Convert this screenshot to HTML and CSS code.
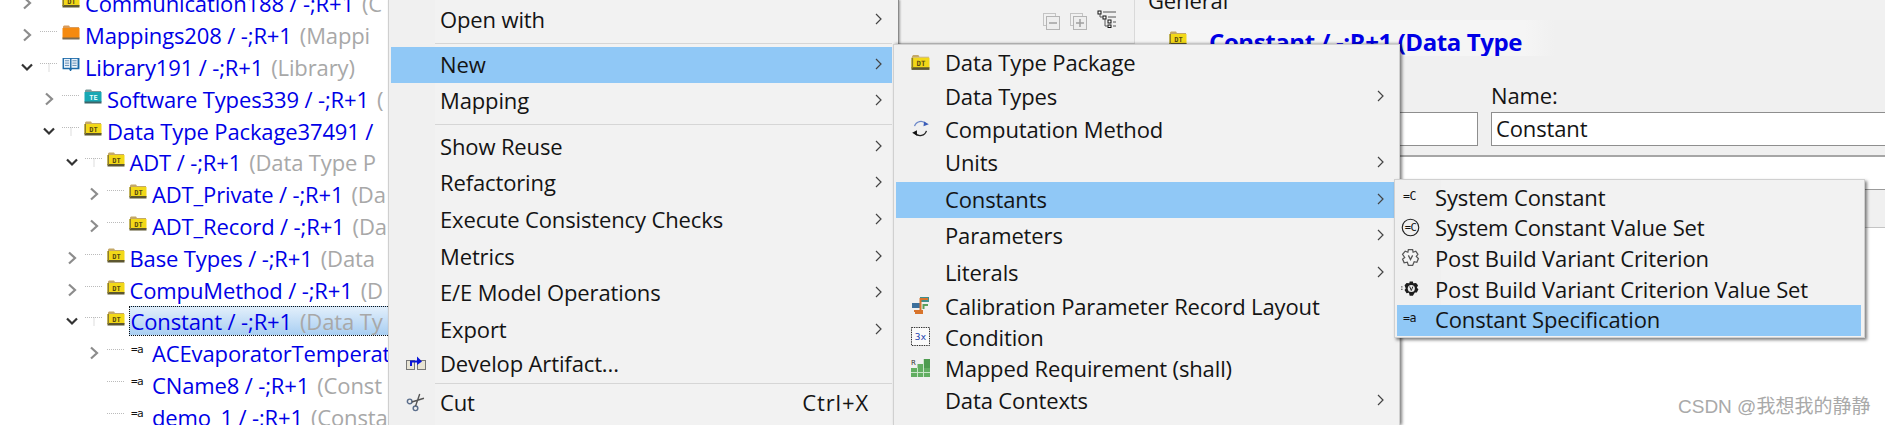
FILE: index.html
```html
<!DOCTYPE html>
<html lang="en">
<head>
<meta charset="utf-8">
<title>Constant</title>
<link rel="stylesheet" href="styles.css">
</head>
<body>
<svg class="defs" xmlns="http://www.w3.org/2000/svg">
  <defs>
    <symbol id="right" viewBox="0 0 12 14"><path d="M3 1.5 9 7 3 12.5" fill="none" stroke="#8c8c8c" stroke-width="2.2"/></symbol>
    <symbol id="down" viewBox="0 0 12 14"><path d="M1 4.5 6 9.5 11 4.5" fill="none" stroke="#333" stroke-width="2.2"/></symbol>
    <symbol id="dotline" viewBox="0 0 18 14"><path d="M0 3.5H18" stroke="#bbb" stroke-width="1" stroke-dasharray="1 1"/></symbol>
    <symbol id="dott" viewBox="0 0 18 14"><path d="M0 3.5H18M9 3.5V12" stroke="#bbb" stroke-width="1" stroke-dasharray="1 1"/></symbol>
    <symbol id="folder" viewBox="0 0 18 15">
      <path d="M1 3V1.5L2 .5H7L8 2H17V3Z" fill="#c4a868"/>
      <rect x=".5" y="3" width="17" height="10" fill="#f2d818"/>
      <rect x=".5" y="12" width="17" height="2.5" fill="#5c5630"/>
      <rect x=".5" y="3" width="1.5" height="10" fill="#8c7c2c"/>
      <text x="9.5" y="11" class="ftxt">DT</text>
    </symbol>
    <symbol id="orange" viewBox="0 0 18 15">
      <path d="M1 3V1.5L2 .5H7L8 2H17V3Z" fill="#d99c5c"/>
      <rect x=".5" y="3" width="17" height="10.5" fill="#f58a10"/>
      <rect x=".5" y="12.5" width="17" height="2" fill="#7c6a50"/>
    </symbol>
    <symbol id="book" viewBox="0 0 19 16">
      <path d="M.5 1H18.5V13H10.5L9.5 15H8.500L7.500 13H.5Z" fill="#1c6aa8"/>
      <rect x="2" y="2" width="6.500" height="9.500" fill="#eaf2fa"/>
      <rect x="10" y="2" width="6.500" height="9.500" fill="#eaf2fa"/>
      <path d="M3 4H7.500M3 6.500H7.500M3 9H7.500M11 4H15.500M11 6.500H15.500M11 9H15.500" stroke="#5a88b0"/>
    </symbol>
    <symbol id="te" viewBox="0 0 18 15">
      <path d="M1 3V1.5L2 .5H7L8 2H17V3Z" fill="#7a9a9a"/>
      <rect x=".5" y="3" width="17" height="10" fill="#18a8b4"/>
      <rect x=".5" y="12.500" width="17" height="2" fill="#3d6468"/>
      <text x="9.500" y="11" class="ftxt ftxt-w">TE</text>
    </symbol>
    <symbol id="eqa" viewBox="0 0 18 15"><text x="2" y="9.500" class="mono">=a</text></symbol>
    <symbol id="eqc" viewBox="0 0 18 15"><text x="2" y="11" class="mono">=C</text></symbol>
    <symbol id="eqcc" viewBox="0 0 20 20">
      <circle cx="10" cy="10" r="8.700" fill="none" stroke="#222" stroke-width="1.200"/>
      <text x="4" y="13.500" class="mono">=C</text>
    </symbol>
    <symbol id="gear" viewBox="0 0 18 18">
      <path d="M7 1.500H11L11.500 4 14 3 16 6 14.500 8 16.500 10 15 13.500 12.500 13 11 16.500H7L6 13.500 3 14 1.500 10.500 3.500 9 1.500 6 4 3 6.500 4Z" fill="#f4f4f4" stroke="#555" stroke-width="1.200"/>
      <path d="M7 7 9 11 11 7" fill="none" stroke="#555" stroke-width="1.200"/>
    </symbol>
    <symbol id="gearb" viewBox="0 0 24 18">
      <path d="M0 7H3M0 10H3" stroke="#222" stroke-dasharray="2 1"/>
      <path d="M11 0H15L15.500 2.500 19 2 21.500 5 20 8 22 10 20 14 17.500 14 15 18H11L10 14.500 7 15 4.500 11 6 9 4.500 5 7 2 10.500 2.500Z" fill="#1c1c1c"/>
      <circle cx="13" cy="9" r="4.500" fill="#e8e8e8"/>
      <path d="M11 6.500 13 11.500 15 6.500" fill="none" stroke="#222" stroke-width="1.200"/>
    </symbol>
    <symbol id="develop" viewBox="0 0 20 14">
      <rect x=".5" y="4.500" width="8" height="9" fill="#e8e4d4" stroke="#777"/>
      <rect x="11.500" y="4.500" width="8" height="9" fill="#e8e4d4" stroke="#777"/>
      <path d="M5 10V5.500H13" fill="none" stroke="#0a14d8" stroke-width="2"/>
      <path d="M11 .5 16 5.500 11 9Z" fill="#0a14d8"/>
    </symbol>
    <symbol id="scissors" viewBox="0 0 18 18">
      <circle cx="3.500" cy="8" r="2.200" fill="none" stroke="#5c6f8c" stroke-width="1.400"/>
      <circle cx="9" cy="14.500" r="2.200" fill="none" stroke="#5c6f8c" stroke-width="1.400"/>
      <path d="M5.500 8.500 17 5M9 12.500 13 1" fill="none" stroke="#555" stroke-width="1.300"/>
    </symbol>
    <symbol id="compu" viewBox="0 0 16 16">
      <path d="M3 6A5.500 5.500 0 0 1 12.500 4" fill="none" stroke="#6a86c8" stroke-width="1.100"/>
      <path d="M11 2 15 4.500 10.500 6Z" fill="#3a5cb8"/>
      <path d="M13 10A5.500 5.500 0 0 1 3.500 12" fill="none" stroke="#222" stroke-width="1.100"/>
      <path d="M5 9.500 1 11.500 5 14Z" fill="#111"/>
    </symbol>
    <symbol id="calib" viewBox="0 0 19 19">
      <rect x="9" y="1" width="9" height="5" fill="#3f8f8c"/>
      <rect x="1" y="7" width="9" height="5" fill="#3b6f9c"/>
      <path d="M17 3H9.500V15H3" fill="none" stroke="#d8742c" stroke-width="2"/>
      <path d="M17 9H12.500V13" fill="none" stroke="#5aa05c" stroke-width="2"/>
      <rect x="4" y="14" width="8" height="4" fill="#d8742c"/>
    </symbol>
    <symbol id="cond" viewBox="0 0 20 20">
      <rect x=".5" y=".5" width="19" height="19" fill="#fafafa" stroke="#222" stroke-dasharray="1.500 1"/>
      <text x="4" y="14" class="cond-t">3x</text>
    </symbol>
    <symbol id="mapped" viewBox="0 0 19 19">
      <rect x="0" y="10" width="19" height="9" fill="#62ae62"/>
      <rect x="6.500" y="6" width="6" height="4" fill="#62ae62"/>
      <rect x="12.500" y="1" width="6.500" height="9" fill="#4e9c50"/>
      <path d="M0 14.500H19M6.500 10V19M12.500 1V19" stroke="#c8e4c8"/>
      <text x="0" y="7" class="map-t">R</text>
    </symbol>
    <symbol id="collapse" viewBox="0 0 17 17">
      <rect x=".5" y=".5" width="12" height="12" fill="none" stroke="#c4c4c4"/>
      <rect x="3.500" y="3.500" width="13" height="13" fill="#eee" stroke="#b4b4b4"/>
      <path d="M6 10H14" stroke="#a0a0a0" stroke-width="1.500"/>
    </symbol>
    <symbol id="expand" viewBox="0 0 17 17">
      <rect x=".5" y=".5" width="12" height="12" fill="none" stroke="#c4c4c4"/>
      <rect x="3.500" y="3.500" width="13" height="13" fill="#eee" stroke="#b4b4b4"/>
      <path d="M6 10H14M10 6V14" stroke="#a0a0a0" stroke-width="1.500"/>
    </symbol>
    <symbol id="treeview" viewBox="0 0 20 18">
      <rect x="1" y="1" width="3" height="3" fill="#fff" stroke="#111"/>
      <rect x="6" y="6" width="3" height="3" fill="#fff" stroke="#111"/>
      <rect x="11" y="10" width="3" height="3" fill="#fff" stroke="#111"/>
      <rect x="11" y="15" width="3" height="2.500" fill="#fff" stroke="#111"/>
      <path d="M6 2H19M11 7H19M16 12H19M16 16H19" stroke="#555"/>
      <path d="M3 4V7H6M8 9V16H11" fill="none" stroke="#555"/>
    </symbol>
    <symbol id="arrow" viewBox="0 0 7 12"><path d="M1 1 6 6 1 11" fill="none" stroke="#444" stroke-width="1.200"/></symbol>
  </defs>
</svg>

<div class="app">
  <section class="left-pane">
    <div class="tree">
      <div class="row l0"><svg class="chev"><use href="#right"/></svg><svg class="dots"><use href="#dotline"/></svg><svg class="ticon"><use href="#folder"/></svg><span class="name">Communication188 / -;R+1</span><span class="kind">(C</span></div>
      <div class="row l0"><svg class="chev"><use href="#right"/></svg><svg class="dots"><use href="#dotline"/></svg><svg class="ticon"><use href="#orange"/></svg><span class="name">Mappings208 / -;R+1</span><span class="kind">(Mappi</span></div>
      <div class="row l0"><svg class="chev"><use href="#down"/></svg><svg class="dots"><use href="#dott"/></svg><svg class="ticon"><use href="#book"/></svg><span class="name">Library191 / -;R+1</span><span class="kind">(Library)</span></div>
      <div class="row l1"><svg class="chev"><use href="#right"/></svg><svg class="dots"><use href="#dotline"/></svg><svg class="ticon"><use href="#te"/></svg><span class="name">Software Types339 / -;R+1</span><span class="kind">(</span></div>
      <div class="row l1"><svg class="chev"><use href="#down"/></svg><svg class="dots"><use href="#dott"/></svg><svg class="ticon"><use href="#folder"/></svg><span class="name">Data Type Package37491 /</span></div>
      <div class="row l2"><svg class="chev"><use href="#down"/></svg><svg class="dots"><use href="#dott"/></svg><svg class="ticon"><use href="#folder"/></svg><span class="name">ADT / -;R+1</span><span class="kind">(Data Type P</span></div>
      <div class="row l3"><svg class="chev"><use href="#right"/></svg><svg class="dots"><use href="#dotline"/></svg><svg class="ticon"><use href="#folder"/></svg><span class="name">ADT_Private / -;R+1</span><span class="kind">(Da</span></div>
      <div class="row l3"><svg class="chev"><use href="#right"/></svg><svg class="dots"><use href="#dotline"/></svg><svg class="ticon"><use href="#folder"/></svg><span class="name">ADT_Record / -;R+1</span><span class="kind">(Da</span></div>
      <div class="row l2"><svg class="chev"><use href="#right"/></svg><svg class="dots"><use href="#dotline"/></svg><svg class="ticon"><use href="#folder"/></svg><span class="name">Base Types / -;R+1</span><span class="kind">(Data</span></div>
      <div class="row l2"><svg class="chev"><use href="#right"/></svg><svg class="dots"><use href="#dotline"/></svg><svg class="ticon"><use href="#folder"/></svg><span class="name">CompuMethod / -;R+1</span><span class="kind">(D</span></div>
      <div class="row l2"><svg class="chev"><use href="#down"/></svg><svg class="dots"><use href="#dott"/></svg><svg class="ticon"><use href="#folder"/></svg><span class="sel"><span class="name">Constant / -;R+1</span><span class="kind">(Data Ty</span></span></div>
      <div class="row l3"><svg class="chev"><use href="#right"/></svg><svg class="dots"><use href="#dotline"/></svg><svg class="ticon"><use href="#eqa"/></svg><span class="name">ACEvaporatorTemperat</span></div>
      <div class="row l3"><svg class="chev"></svg><svg class="dots"><use href="#dotline"/></svg><svg class="ticon"><use href="#eqa"/></svg><span class="name">CName8 / -;R+1</span><span class="kind">(Const</span></div>
      <div class="row l3"><svg class="chev"></svg><svg class="dots"><use href="#dotline"/></svg><svg class="ticon"><use href="#eqa"/></svg><span class="name">demo_1 / -;R+1</span><span class="kind">(Consta</span></div>
    </div>
    <div class="tools">
      <svg class="tool"><use href="#collapse"/></svg>
      <svg class="tool"><use href="#expand"/></svg>
      <svg class="tool tool-wide"><use href="#treeview"/></svg>
    </div>
  </section>

  <main class="editor">
    <div class="general">General</div>
    <div class="title"><svg class="title-icon"><use href="#folder"/></svg><h1>Constant / -;R+1 (Data Type</h1></div>
    <div class="fields">
      <div class="field field-short"><div class="input"></div></div>
      <div class="field field-grow"><label>Name:</label><div class="input">Constant</div></div>
    </div>
    <div class="desc"></div>
    <div class="strip"></div>
  </main>
</div>

<nav class="menu menu-a">
  <div class="mi h40"><span class="ico"></span><span>Open with</span><svg class="arr"><use href="#arrow"/></svg></div>
  <div class="sep"></div>
  <div class="mi h36 on"><span class="ico"></span><span>New</span><svg class="arr"><use href="#arrow"/></svg></div>
  <div class="mi h37"><span class="ico"></span><span>Mapping</span><svg class="arr"><use href="#arrow"/></svg></div>
  <div class="sep sep-l"></div>
  <div class="mi h366"><span class="ico"></span><span>Show Reuse</span><svg class="arr"><use href="#arrow"/></svg></div>
  <div class="mi h366"><span class="ico"></span><span>Refactoring</span><svg class="arr"><use href="#arrow"/></svg></div>
  <div class="mi h366"><span class="ico"></span><span>Execute Consistency Checks</span><svg class="arr"><use href="#arrow"/></svg></div>
  <div class="mi h366"><span class="ico"></span><span>Metrics</span><svg class="arr"><use href="#arrow"/></svg></div>
  <div class="mi h366"><span class="ico"></span><span>E/E Model Operations</span><svg class="arr"><use href="#arrow"/></svg></div>
  <div class="mi h366"><span class="ico"></span><span>Export</span><svg class="arr"><use href="#arrow"/></svg></div>
  <div class="mi h31"><span class="ico"><svg class="mico-dev"><use href="#develop"/></svg></span><span>Develop Artifact...</span></div>
  <div class="sep"></div>
  <div class="mi h34"><span class="ico"><svg class="mico"><use href="#scissors"/></svg></span><span>Cut</span><span class="short">Ctrl+X</span></div>
</nav>

<nav class="menu menu-b">
  <div class="mi h334"><span class="ico"><svg class="mico"><use href="#folder"/></svg></span><span>Data Type Package</span></div>
  <div class="mi h334"><span class="ico"></span><span>Data Types</span><svg class="arr"><use href="#arrow"/></svg></div>
  <div class="mi h334"><span class="ico"><svg class="mico"><use href="#compu"/></svg></span><span>Computation Method</span></div>
  <div class="mi h334"><span class="ico"></span><span>Units</span><svg class="arr"><use href="#arrow"/></svg></div>
  <div class="mi h36 on after-units"><span class="ico"></span><span>Constants</span><svg class="arr"><use href="#arrow"/></svg></div>
  <div class="mi h37"><span class="ico"></span><span>Parameters</span><svg class="arr"><use href="#arrow"/></svg></div>
  <div class="mi h366"><span class="ico"></span><span>Literals</span><svg class="arr"><use href="#arrow"/></svg></div>
  <div class="mi h31"><span class="ico"><svg class="mico"><use href="#calib"/></svg></span><span>Calibration Parameter Record Layout</span></div>
  <div class="mi h31"><span class="ico"><svg class="mico"><use href="#cond"/></svg></span><span>Condition</span></div>
  <div class="mi h31"><span class="ico"><svg class="mico"><use href="#mapped"/></svg></span><span>Mapped Requirement (shall)</span></div>
  <div class="mi h34"><span class="ico"></span><span>Data Contexts</span><svg class="arr"><use href="#arrow"/></svg></div>
</nav>

<nav class="menu menu-c">
  <div class="mi h306"><span class="ico"><svg class="mico"><use href="#eqc"/></svg></span><span>System Constant</span></div>
  <div class="mi h306"><span class="ico"><svg class="mico"><use href="#eqcc"/></svg></span><span>System Constant Value Set</span></div>
  <div class="mi h306"><span class="ico"><svg class="mico"><use href="#gear"/></svg></span><span>Post Build Variant Criterion</span></div>
  <div class="mi h306"><span class="ico"><svg class="mico"><use href="#gearb"/></svg></span><span>Post Build Variant Criterion Value Set</span></div>
  <div class="mi h306 on"><span class="ico"><svg class="mico"><use href="#eqa"/></svg></span><span>Constant Specification</span></div>
</nav>

<div class="watermark">CSDN @我想我的静静</div>
</body>
</html>
```

FILE: styles.css
```css
* { box-sizing: border-box; }
html, body { margin: 0; height: 425px; overflow: hidden; background: #fff; }
body {
  font-family: "Open Sans", "Noto Sans CJK SC", sans-serif;
  font-size: 22px;
  letter-spacing: -0.13px;
  color: #141414;
  position: relative;
}
.defs { display: block; width: 0; height: 0; }
.ftxt { font: bold 7px "DejaVu Sans Mono", monospace; fill: #5a4a10; text-anchor: middle; letter-spacing: 0; }
.ftxt-w { fill: #e8ffff; }
.mono { font: 11px "DejaVu Sans Mono", monospace; fill: #111; letter-spacing: -0.6px; }
.cond-t { font: 10px "DejaVu Sans Mono", monospace; fill: #2040b0; letter-spacing: 0; }
.map-t { font: 7px "DejaVu Sans", sans-serif; fill: #333; letter-spacing: 0; }

.app { display: flex; height: 425px; overflow: hidden; }

/* left pane */
.left-pane { display: flex; flex: 0 0 1135px; align-items: flex-start; background: #fff; border-right: 1px solid #d9d9d9; }
.tree { flex: 0 0 388px; overflow: hidden; margin-top: -12.500px; height: 447px; }
.row { display: flex; align-items: center; height: 31.8px; white-space: nowrap; color: #0000e6; }
.l0 { padding-left: 21px; }
.l1 { padding-left: 43px; }
.l2 { padding-left: 65.500px; }
.l3 { padding-left: 88px; }
.chev { flex: 0 0 12px; width: 12px; height: 14px; margin-right: 7px; }
.dots { flex: 0 0 18px; width: 18px; height: 14px; margin-right: 4px; }
.ticon { flex: 0 0 18px; width: 18px; height: 15px; margin: -5px 5px 0 0; overflow: visible; }
.name { margin-right: 8px; }
.kind { color: #a8a8a8; }
.sel { display: flex; align-items: center; flex: 1; height: 30px; margin-left: -1px; padding-left: 1px;
  border: 1px dotted #111; border-right: 0;
  background: linear-gradient(#e2effb, #a8cef2); }
.tools { flex: 1; height: 44px; display: flex; justify-content: flex-end; align-items: center; gap: 10px;
  padding: 0 17px 0 0; background: #f1f1f1; border-bottom: 1px solid #d6d6d6; }
.tool { width: 17px; height: 17px; }
.tool-wide { width: 20px; height: 18px; margin-bottom: 5px; }

/* editor */
.editor { flex: 1; min-width: 0; display: flex; flex-direction: column; background: #f0f0f0; }
.general { margin-top: -13px; height: 33px; padding-left: 13px; line-height: 27px; background: #f1f1f1; }
.title { display: flex; align-items: center; height: 36px; padding: 7px 0 0 34px; overflow: hidden; white-space: nowrap; background: linear-gradient(90deg, #f5f5f5 390px, #f0f0f0 420px); }
.title-icon { flex: none; width: 18px; height: 15px; margin: -6px 22px 0 0; }
.title h1 { margin: 0; font-size: 24px; font-weight: 700; color: #0000e6; letter-spacing: -0.4px; }
.fields { display: flex; gap: 13px; height: 99px; padding-top: 28px; }
.field { display: flex; flex-direction: column; justify-content: flex-end; height: 62px; }
.field-short { flex: 0 0 343px; }
.field-grow { flex: 1; min-width: 0; margin-right: -30px; }
.field label { height: 28px; line-height: 23px; }
.input { flex: none; height: 34px; line-height: 31px; padding-left: 4px; background: #fff; border: 1px solid #8e8e8e; }
.desc { height: 35px; background: #fff; border-top: 2px solid #a6a6a6; border-bottom: 1px solid #9a9a9a; }
.strip { height: 38px; background: #f0f0f0; border-bottom: 1px solid #c4c4c4; }
.editor::after { content: ""; flex: 1; background: #fff; }

/* menus: overlays */
.menu { position: absolute; background: linear-gradient(90deg, #f0f0f0 46px, #f2f2f2 46px); white-space: nowrap; }
.menu-a { left: 388px; top: 0; width: 511px; height: 425px; padding: 0 6px 0 2px; border-left: 1px solid #cfcfcf;
  border-right: 1px solid #8a8a8a; box-shadow: 1px 0 2px rgba(0, 0, 0, .35); }
.menu-b { left: 893px; top: 44px; width: 507px; height: 381px; padding: 2px 5px 0 2px; border: 1px solid #d0d0d0;
  border-bottom: 0; box-shadow: 2px 0 3px rgba(0, 0, 0, .5); }
.menu-c { left: 1394px; top: 179px; width: 471px; height: 159px; padding: 3px 3px 0 2px; border: 1px solid #d0d0d0;
  box-shadow: 2px 2px 3px rgba(0, 0, 0, .5); }
.mi { display: flex; align-items: center; padding-bottom: 3px; }
.on { background: #90c8f6; }
.ico { flex: 0 0 49px; display: flex; align-items: center; justify-content: center; }
.menu-c .ico { flex-basis: 38px; padding-right: 12px; }
.mico { width: 19px; height: 19px; overflow: visible; }
.mico-dev { width: 20px; height: 14px; }
.arr { width: 7px; height: 12px; margin-left: auto; margin-right: 10px; }
.short { margin-left: auto; margin-right: 23px; letter-spacing: 0.85px; }
.sep { height: 1px; margin: 3px 0 3px 44px; background: #d6d6d6; }
.sep-l { margin-top: 4px; margin-bottom: 4px; }
.after-units { margin-top: 1.5px; }
.h31 { height: 31px; }
.h306 { height: 30.6px; }
.h334 { height: 33.4px; }
.h34 { height: 34px; }
.h36 { height: 36px; }
.h366 { height: 36.6px; }
.h37 { height: 37px; }
.h40 { height: 40px; }

.watermark { position: absolute; left: 1678px; top: 396px; font: 19px/22px "Liberation Sans", "Noto Sans CJK SC", sans-serif;
  letter-spacing: 0; color: #a9a9a9; }
```
